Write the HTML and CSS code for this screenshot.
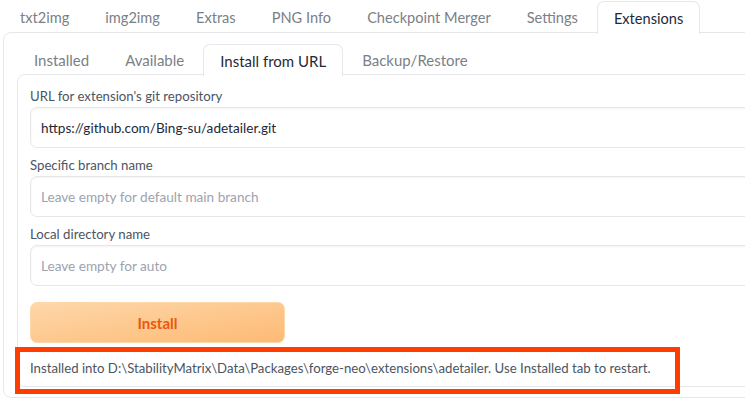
FILE: index.html
```html
<!DOCTYPE html>
<html lang="en">

<head>
    <meta charset="UTF-8">
    <meta name="viewport" content="width=device-width, initial-scale=1.0">
    <title>Extensions</title>
    <link rel="stylesheet" href="styles.css">
</head>

<body>

    <div class="app">
        <div class="tab-nav">
            <button class="tab">txt2img</button>
            <button class="tab">img2img</button>
            <button class="tab">Extras</button>
            <button class="tab">PNG Info</button>
            <button class="tab">Checkpoint Merger</button>
            <button class="tab">Settings</button>
            <button class="tab selected">Extensions</button>
        </div>

        <div class="tab-panel outer">
            <div class="tab-nav sub">
                <button class="tab">Installed</button>
                <button class="tab">Available</button>
                <button class="tab selected">Install from URL</button>
                <button class="tab">Backup/Restore</button>
            </div>

            <div class="tab-panel inner">
                <label class="field">
                    <span class="field-label">URL for extension's git repository</span>
                    <input type="text" value="https://github.com/Bing-su/adetailer.git">
                </label>
                <label class="field">
                    <span class="field-label">Specific branch name</span>
                    <input type="text" placeholder="Leave empty for default main branch">
                </label>
                <label class="field">
                    <span class="field-label">Local directory name</span>
                    <input type="text" placeholder="Leave empty for auto">
                </label>

                <button class="primary">Install</button>

                <div class="result">
                    Installed into D:\StabilityMatrix\Data\Packages\forge-neo\extensions\adetailer. Use Installed tab to restart.
                    <!-- highlight frame around the result message -->
                    <span class="highlight"></span>
                </div>
            </div>
        </div>
    </div>

</body>

</html>
```

FILE: styles.css
```css
body {
    margin: 0;
    background: white;
    font-family: "Lato", "Liberation Sans", sans-serif;
    overflow: hidden;
}

.app {
    width: 800px;
    padding-left: 3px;
}

.tab-nav {
    display: flex;
    height: 33px;
}

.tab {
    font-family: inherit;
    font-size: 14.6px;
    color: #7b7f86;
    background: none;
    border: 1px solid transparent;
    border-bottom: none;
    border-radius: 7px 7px 0 0;
    padding: 0 16px;
    margin-right: 2px;
    cursor: pointer;
}

.tab.selected {
    color: #1f2937;
    background: white;
    border-color: #e5e7eb;
    margin-top: 1px;
    position: relative;
    z-index: 1;
    height: 33px;
}

.tab-panel {
    border: 1px solid #e5e7eb;
    border-radius: 8px;
    margin-top: -1px;
    background: white;
}

.outer {
    padding: 10px 0 10px 13px;
}

.sub {
    height: 32px;
}

.sub .tab {
    height: 32px;
    font-size: 15px;
}

.inner {
    padding: 11px 0 0 12px;
    height: 300px;
    position: relative;
}

.field {
    display: block;
    margin-bottom: 7px;
}

.field-label {
    display: block;
    font-size: 13.2px;
    line-height: 20px;
    color: #4b5563;
    margin-bottom: 1px;
}

.field input {
    box-sizing: border-box;
    width: 100%;
    height: 41px;
    border: 1px solid #e5e7eb;
    border-radius: 7px;
    padding: 0 10px;
    font-family: inherit;
    font-size: 13.6px;
    color: #1f2937;
    box-shadow: inset 0 1px 2px rgba(0, 0, 0, 0.05);
    outline: none;
}

.field input::placeholder {
    color: #9ca3af;
}

.primary {
    display: block;
    width: 255px;
    height: 41px;
    margin-top: 16px;
    border: 1px solid #fed7aa;
    border-radius: 7px;
    background: linear-gradient(to bottom right, #fed7aa, #fdba74);
    color: #ea580c;
    font-family: inherit;
    font-size: 15px;
    font-weight: bold;
    cursor: pointer;
}

.result {
    position: relative;
    margin-top: 7px;
    line-height: 36px;
    font-size: 13.2px;
    color: #4b5563;
}

.highlight {
    position: absolute;
    left: -15px;
    top: -3px;
    width: 655px;
    height: 37px;
    border: 5px solid #ff3d00;
}
```
